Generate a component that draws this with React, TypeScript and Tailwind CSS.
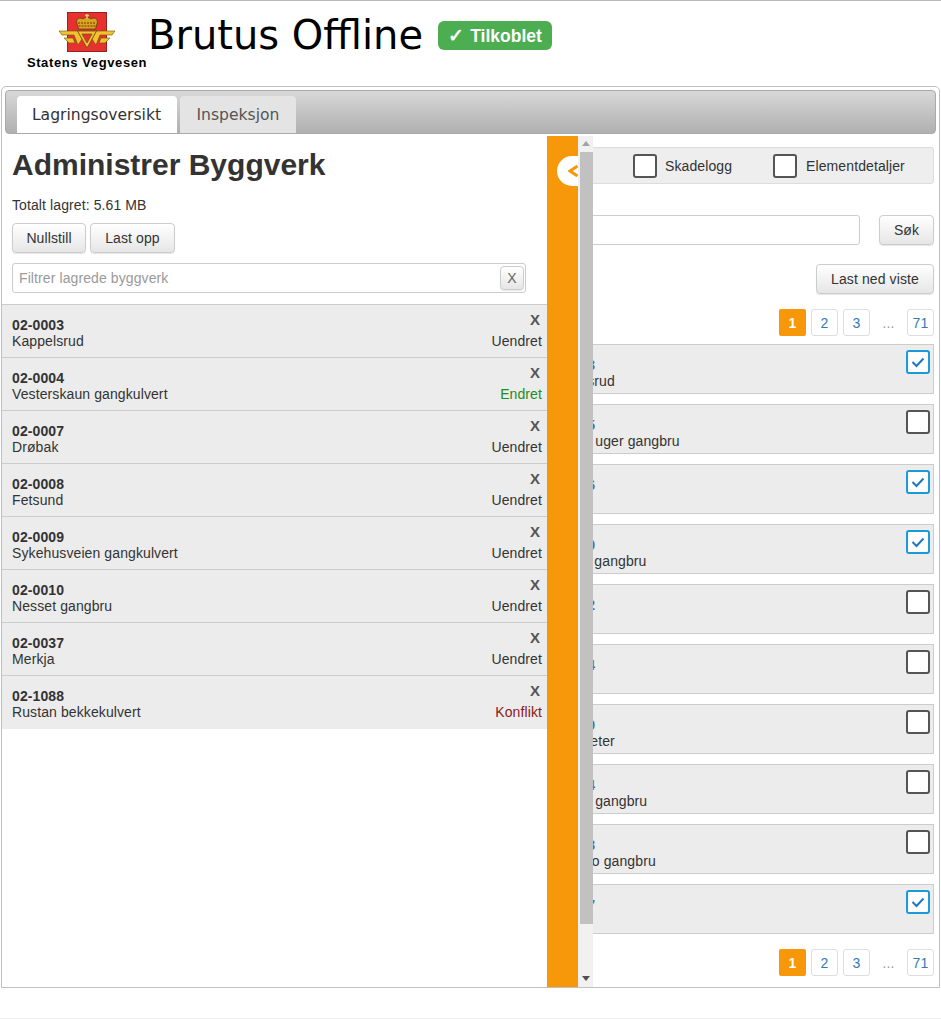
import React from "react";

const saved = [
  { id: "02-0003", name: "Kappelsrud", status: "Uendret" },
  { id: "02-0004", name: "Vesterskaun gangkulvert", status: "Endret" },
  { id: "02-0007", name: "Drøbak", status: "Uendret" },
  { id: "02-0008", name: "Fetsund", status: "Uendret" },
  { id: "02-0009", name: "Sykehusveien gangkulvert", status: "Uendret" },
  { id: "02-0010", name: "Nesset gangbru", status: "Uendret" },
  { id: "02-0037", name: "Merkja", status: "Uendret" },
  { id: "02-1088", name: "Rustan bekkekulvert", status: "Konflikt" },
];

const results = [
  { id: "02-0003", name: "Kappelsrud", checked: true },
  { id: "02-0005", name: "Nittedal uger gangbru", checked: false },
  { id: "02-0006", name: "", checked: true },
  { id: "02-0030", name: "Kirkeby gangbru", checked: true },
  { id: "02-0032", name: "", checked: false },
  { id: "02-0034", name: "", checked: false },
  { id: "02-0040", name: "Kongsseter", checked: false },
  { id: "02-0044", name: "Kolbotn gangbru", checked: false },
  { id: "02-0048", name: "Kvernmo gangbru", checked: false },
  { id: "02-0057", name: "", checked: true },
];

const statusColor: Record<string, string> = {
  Uendret: "text-[#333]",
  Endret: "text-[#228b22]",
  Konflikt: "text-[#8b1a1a]",
};

const btn =
  "border border-[#ccc] rounded-[4px] bg-gradient-to-b from-[#fff] to-[#e6e6e6] text-[14px] text-[#333] shadow-[0_1px_1px_rgba(0,0,0,0.1)]";

function Logo() {
  return (
    <svg width="58" height="42" viewBox="0 0 58 42">
      <rect x="9.5" y="0.5" width="39" height="39" fill="#e8312f" stroke="#8c2a22" />
      {/* crown */}
      <path d="M19 12 C17 6 23 5 25 7 C27 5 31 5 33 7 C35 5 41 6 39 12 L37.5 17 H20.5 Z" fill="#d9a520" stroke="#5a3a10" strokeWidth="0.8" />
      <path d="M29 2 V7 M27 3.5 H31" stroke="#eec65a" strokeWidth="1.5" />
      <path d="M20 11 H38 M20.5 14 H37.5" stroke="#7a2a12" strokeWidth="1" strokeDasharray="2 1" />
      {/* wings */}
      <path d="M1 19 H20 L24 27 L20 33 L16 23 H4 Z" fill="#f0c22e" stroke="#6b4d12" strokeWidth="0.6" />
      <path d="M57 19 H38 L34 27 L38 33 L42 23 H54 Z" fill="#f0c22e" stroke="#6b4d12" strokeWidth="0.6" />
      <path d="M6 26 H15 L17 31 H11 Z M52 26 H43 L41 31 H47 Z" fill="#f0c22e" stroke="#6b4d12" strokeWidth="0.6" />
      {/* road triangle */}
      <path d="M19.5 19 H38.5 L29 36 Z" fill="#f0c22e" stroke="#6b4d12" strokeWidth="0.8" />
      <path d="M24 22 H34 L29 31 Z" fill="#e8312f" stroke="#6b4d12" strokeWidth="0.7" />
    </svg>
  );
}

function CheckBox({ checked }: { checked: boolean }) {
  return (
    <span
      className={`flex h-6 w-6 items-center justify-center rounded-[3px] border-2 bg-white ${
        checked ? "border-[#1a9bd7]" : "border-[#555]"
      }`}
    >
      {checked && (
        <svg width="14" height="12" viewBox="0 0 14 12">
          <path d="M1.5 6 L5.5 10 L12.5 2.5" fill="none" stroke="#1f78c1" strokeWidth="2" />
        </svg>
      )}
    </span>
  );
}

function Pager() {
  const page = "flex h-[27px] items-center justify-center rounded-[3px] border border-[#ddd] bg-white text-[14px] text-[#337ab7]";
  return (
    <div className="flex justify-end text-[14px]">
      <span className="flex h-[27px] w-[27px] items-center justify-center rounded-[2px] bg-[#f7970a] font-bold text-white">1</span>
      <span className={`${page} ml-[5px] w-[27px]`}>2</span>
      <span className={`${page} ml-[5px] w-[27px]`}>3</span>
      <span className="flex w-[37px] items-center justify-center text-[#999]">...</span>
      <span className={`${page} w-[27px]`}>71</span>
    </div>
  );
}

export default function App() {
  return (
    <div className="h-[1019px] w-[941px] overflow-hidden border-b border-[#f0f0f0] bg-white font-['Liberation_Sans',Arial,sans-serif] text-[14px] leading-[16px] tracking-[0.1px] text-[#333]">
      <header className="flex h-[86px] border-t border-[#bbb]">
        <div className="ml-[27px] mt-[11px] flex w-[120px] flex-col items-center">
          <Logo />
          <span className="mt-[1px] whitespace-nowrap text-[13px] font-bold tracking-[0.6px] text-black">Statens Vegvesen</span>
        </div>
        <h1 className="ml-[1px] mt-[10px] font-['DejaVu_Sans',sans-serif] text-[40px] font-normal leading-[48px] tracking-normal text-black">Brutus Offline</h1>
        <span className="ml-[15px] mt-[20px] flex h-[29px] w-[114px] items-center justify-center gap-[6px] rounded-[6px] bg-[#4cae50] text-[17.5px] font-bold tracking-normal text-white">
          <span className="text-[19px]">✓</span>
          <span>Tilkoblet</span>
        </span>
      </header>

      <main className="ml-[1px] flex h-[902px] w-[939px] flex-col overflow-hidden rounded-t-[5px] border border-[#c0c0c0]">
        <nav className="mx-[3px] mt-[3px] flex h-[44px] shrink-0 items-end rounded-[4px] border border-[#aaa] bg-gradient-to-b from-[#d8d8d8] to-[#b0b0b0] pl-[11px]">
          <span className="flex h-[37px] w-[160px] items-center justify-center rounded-t-[4px] bg-white pr-[1px] font-['DejaVu_Sans',sans-serif] text-[15.6px] tracking-normal text-[#333]">Lagringsoversikt</span>
          <span className="ml-[3px] flex h-[37px] w-[116px] items-center justify-center rounded-t-[4px] bg-[#e4e4e4] font-['DejaVu_Sans',sans-serif] text-[15.6px] tracking-normal text-[#555]">Inspeksjon</span>
        </nav>

        <div className="flex min-h-0 flex-1 pt-[2px]">
          <section className="w-[545px] shrink-0">
            <h2 className="ml-[10px] mt-[12px] text-[30px] font-bold leading-[33px] tracking-normal text-[#333]">Administrer Byggverk</h2>
            <p className="ml-[10px] mt-[16px]">Totalt lagret: 5.61 MB</p>
            <div className="ml-[10px] mt-[10px] flex gap-[4px]">
              <button className={`${btn} h-[30px] w-[74px]`}>Nullstill</button>
              <button className={`${btn} h-[30px] w-[85px]`}>Last opp</button>
            </div>
            <div className="ml-[10px] mt-[10px] flex h-[30px] w-[514px] items-center justify-between rounded-[3px] border border-[#ccc] pl-[6px] pr-[1px]">
              <span className="text-[#999]">Filtrer lagrede byggverk</span>
              <button className={`${btn} h-[24px] w-[24px] text-[#666]`}>X</button>
            </div>
            <ul className="mt-[11px] border-t border-[#ccc]">
              {saved.map((s) => (
                <li key={s.id} className="flex h-[53px] justify-between border-b border-[#ccc] bg-[#ececec] pl-[10px] pr-[5px] last:border-b-0">
                  <div className="pt-[12px]">
                    <div className="font-bold">{s.id}</div>
                    <div>{s.name}</div>
                  </div>
                  <div className="flex flex-col items-end pt-[7px]">
                    <span className="mr-[2px] text-[15px] font-bold text-[#555]">X</span>
                    <span className={`mt-[5px] ${statusColor[s.status]}`}>{s.status}</span>
                  </div>
                </li>
              ))}
            </ul>
          </section>

          <div className="relative w-[31px] shrink-0 bg-[#f7970a]">
            <div className="absolute left-[10px] top-[20px] flex h-[30px] w-[21px] items-center overflow-hidden rounded-l-full bg-white pl-[11px]">
              <svg width="10" height="12" viewBox="0 0 10 12">
                <path d="M9.5 1 L2 6 L9.5 11" fill="none" stroke="#f7970a" strokeWidth="3" />
              </svg>
            </div>
          </div>

          <div className="flex w-[15px] shrink-0 flex-col items-center bg-[#f1f1f1]">
            <svg className="mt-[5px]" width="8" height="5" viewBox="0 0 8 5"><path d="M4 0 L8 5 H0 Z" fill="#a3a3a3" /></svg>
            <div className="ml-[1px] mt-[6px] h-[772px] w-[13px] bg-[#c1c1c1]" />
            <svg className="mt-auto mb-[6px]" width="8" height="5" viewBox="0 0 8 5"><path d="M4 5 L8 0 H0 Z" fill="#505050" /></svg>
          </div>

          <section className="flex min-w-0 flex-1 justify-end overflow-hidden">
            <div className="mr-[5px] w-[402px] shrink-0">
              <div className="mt-[11px] flex h-[37px] items-center rounded-[3px] border border-[#ddd] bg-[#eee] pl-[100px] text-[14px]">
                <CheckBox checked={false} />
                <span className="ml-[8px]">Skadelogg</span>
                <span className="ml-[41px]"><CheckBox checked={false} /></span>
                <span className="ml-[9px]">Elementdetaljer</span>
              </div>
              <div className="mt-[31px] flex">
                <div className="h-[30px] w-[328px] rounded-[3px] border border-[#ccc] bg-white" />
                <button className={`${btn} ml-[19px] h-[30px] w-[55px]`}>Søk</button>
              </div>
              <div className="mt-[19px] flex justify-end">
                <button className={`${btn} h-[30px] w-[118px]`}>Last ned viste</button>
              </div>
              <div className="mt-[15px]"><Pager /></div>
              <ul className="mt-[8px] flex flex-col gap-[10px]">
                {results.map((r) => (
                  <li key={r.id} className="flex h-[50px] justify-between border border-[#ccc] bg-[#ececec] pl-[10px] pr-[3px] pt-[5px]">
                    <div className="whitespace-nowrap pt-[7px]">
                      <div className="font-bold text-[#337ab7]">{r.id}</div>
                      <div>{r.name}</div>
                    </div>
                    <CheckBox checked={r.checked} />
                  </li>
                ))}
              </ul>
              <div className="mt-[15px]"><Pager /></div>
            </div>
          </section>
        </div>
      </main>
    </div>
  );
}
